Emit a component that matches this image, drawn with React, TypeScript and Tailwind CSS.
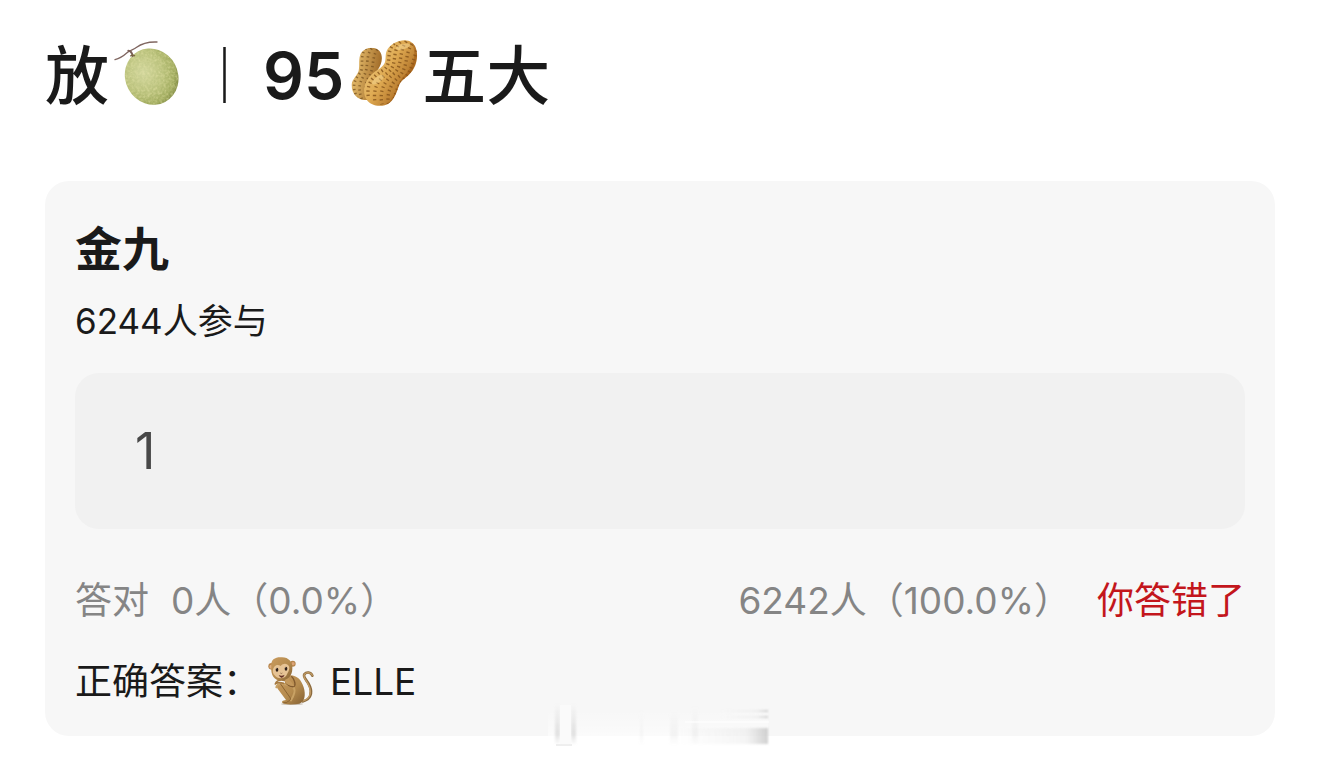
function Melon() {
  return (
    <svg viewBox="0 0 228 228" className="mb-2 size-19 shrink-0" role="img" aria-label="甜瓜">
      <defs>
        <radialGradient id="melonSkin" cx="0.4" cy="0.36" r="0.68">
          <stop offset="0" stopColor="#d0d59b" />
          <stop offset="0.55" stopColor="#b9c17b" />
          <stop offset="0.85" stopColor="#a0ab5e" />
          <stop offset="1" stopColor="#828c46" />
        </radialGradient>
        <filter id="melonGrain" x="0" y="0" width="1" height="1" colorInterpolationFilters="sRGB">
          <feTurbulence type="fractalNoise" baseFrequency="0.16" numOctaves="2" seed="4" />
          <feColorMatrix values="0 0 0 0 0.92  0 0 0 0 0.91  0 0 0 0 0.68  2.6 0 0 0 -1.05" />
          <feComposite in2="SourceGraphic" operator="in" />
        </filter>
      </defs>
      <ellipse cx="125" cy="128" rx="79" ry="86" transform="rotate(-28 125 128)" fill="url(#melonSkin)" />
      <ellipse cx="125" cy="128" rx="79" ry="86" transform="rotate(-28 125 128)" fill="#fff" filter="url(#melonGrain)" opacity="0.5" />
      <path d="M15 77C30 73 41 65 51 56C61 47 70 48 80 40C97 27 116 23 141 24" fill="none" stroke="#806761" strokeWidth="4" strokeLinecap="round" />
      <path d="M55 50C62 50 66 55 68 66" fill="none" stroke="#7b6058" strokeWidth="6" strokeLinecap="round" />
      <path d="M61 67Q68 60 75 66" fill="none" stroke="#77643f" strokeWidth="4" />
    </svg>
  );
}

function Peanuts() {
  return (
    <svg viewBox="0 0 228 228" className="mb-2 size-19 shrink-0" role="img" aria-label="花生">
      <defs>
        <linearGradient id="shell" x1="0" y1="0" x2="1" y2="0.6">
          <stop offset="0" stopColor="#c3893a" />
          <stop offset="0.3" stopColor="#edcb83" />
          <stop offset="0.62" stopColor="#dfaa52" />
          <stop offset="1" stopColor="#9c5914" />
        </linearGradient>
        <linearGradient id="shellBack" x1="0" y1="0" x2="1" y2="0.3">
          <stop offset="0" stopColor="#b77d2e" />
          <stop offset="0.4" stopColor="#dfb566" />
          <stop offset="1" stopColor="#9b6422" />
        </linearGradient>
        <clipPath id="backClip">
          <path d="M48 57C62 38 90 37 103 50C116 66 111 91 98 108C86 121 84 139 87 161C89 182 78 200 61 198C37 199 18 177 20 150C22 135 37 124 41 110C45 94 39 75 48 57Z" />
        </clipPath>
        <clipPath id="frontClip">
          <path d="M128 45C143 22 181 10 201 26C219 38 221 76 207 102C197 123 177 132 167 145C157 160 155 190 134 206C111 222 80 217 65 197C50 175 58 143 78 123C94 107 112 103 119 87C124 75 119 58 128 45Z" />
        </clipPath>
      </defs>
      <g clipPath="url(#backClip)">
        <rect width="120" height="210" fill="url(#shellBack)" />
        <g fill="none" stroke="#76501f" strokeWidth="8" strokeDasharray="4 9" opacity="0.75">
          <path d="M63 43C43 63 57 99 46 116C24 142 22 161 36 190" />
          <path d="M80 43C61 67 71 101 58 123C39 151 41 171 51 197" />
          <path d="M97 46C80 69 87 103 73 127C56 154 61 174 69 199" />
        </g>
      </g>
      <g clipPath="url(#frontClip)">
        <rect width="228" height="228" fill="url(#shell)" />
        <g fill="none" stroke="#87561d" strokeWidth="10" strokeDasharray="4 9" opacity="0.85">
          <path d="M148 28C121 55 142 85 118 106C83 127 62 150 71 194" />
          <path d="M166 24C140 55 157 88 133 112C101 137 83 158 90 206" />
          <path d="M184 22C160 54 174 92 149 117C116 143 103 171 111 211" />
          <path d="M201 30C179 61 190 96 164 126C135 151 126 178 130 209" />
          <path d="M215 50C203 79 203 107 178 134C155 159 152 178 148 195" />
        </g>
        <path d="M204 25C224 61 206 104 177 133C153 158 162 187 127 216" fill="none" stroke="#99510d" strokeWidth="9" opacity="0.4" />
        <ellipse cx="174" cy="38" rx="22" ry="8" transform="rotate(-16 174 38)" fill="#fae1a1" opacity="0.45" />
        <ellipse cx="99" cy="137" rx="21" ry="9" transform="rotate(-35 99 137)" fill="#fae1a1" opacity="0.4" />
      </g>
    </svg>
  );
}

function Monkey() {
  return (
    <svg viewBox="0 0 180 180" className="mb-1 size-15 shrink-0" role="img" aria-label="猴子">
      <defs>
        <linearGradient id="fur" x1="0" y1="0" x2="1" y2="1">
          <stop offset="0" stopColor="#c99b5e" />
          <stop offset="0.55" stopColor="#b58b4e" />
          <stop offset="1" stopColor="#846032" />
        </linearGradient>
      </defs>
      <ellipse cx="96" cy="162" rx="33" ry="3" fill="#c6bdb2" />
      <path d="M128 154C153 149 157 128 150 110C143 91 127 82 133 73C139 65 153 65 157 77" fill="none" stroke="#8b6a3d" strokeWidth="8" strokeLinecap="round" />
      <path d="M128 153C151 147 155 128 148 110C141 91 127 82 133 73C139 66 153 66 157 76" fill="none" stroke="#c19b65" strokeWidth="4" strokeLinecap="round" />
      <path d="M82 77C107 72 124 88 131 112C138 135 134 157 118 161C100 164 76 164 69 160C62 156 68 151 78 150L53 116C46 105 56 98 73 104Z" fill="url(#fur)" />
      <path d="M49 112C50 99 76 97 102 114C106 122 102 136 93 151" fill="none" stroke="#c9a265" strokeWidth="6" strokeLinecap="round" />
      <path d="M76 93C79 105 93 113 103 109C109 101 100 84 94 79" fill="none" stroke="#815a2e" strokeWidth="4" />
      <path d="M74 92C72 80 84 77 89 90L104 109C89 105 76 105 74 92Z" fill="#c4995d" />
      <path d="M46 102C50 90 63 89 73 91M47 101C55 96 64 98 71 100" fill="none" stroke="#a77b42" strokeWidth="5" strokeLinecap="round" />
      <path d="M61 101L91 144C94 152 84 153 79 158H70" fill="none" stroke="#8c6432" strokeWidth="3" />
      <circle cx="35" cy="49" r="10" fill="#b6854b" />
      <circle cx="34" cy="50" r="6" fill="#e0ae80" />
      <circle cx="98" cy="41" r="9" fill="#b6854b" />
      <circle cx="99" cy="41" r="5" fill="#dda376" />
      <path d="M34 50C31 28 47 21 64 22C85 21 99 36 97 56C97 77 83 91 64 91C45 93 31 76 34 50Z" fill="url(#fur)" />
      <path d="M43 50C48 43 57 44 62 48C69 39 82 39 87 49C90 58 84 67 81 73C76 88 52 88 44 76C37 70 37 57 43 50Z" fill="#e6c395" />
      <ellipse cx="51" cy="59" rx="4" ry="6" fill="#302018" />
      <ellipse cx="78" cy="56" rx="4" ry="6" fill="#302018" />
      <circle cx="50" cy="56" r="1" fill="#fff" />
      <circle cx="77" cy="53" r="1" fill="#fff" />
      <path d="M61 69Q64 72 67 69" fill="none" stroke="#77513a" strokeWidth="2" />
      <path d="M56 75Q65 80 74 74Q70 84 64 83Q59 82 56 75Z" fill="#633025" />
    </svg>
  );
}

function Smudge() {
  return (
    <svg viewBox="0 0 240 60" className="absolute -bottom-5 left-1/2 h-15 w-60 -translate-x-1/2" aria-hidden="true">
      <defs>
        <linearGradient id="fade" x1="0" y1="0" x2="0" y2="1">
          <stop offset="0" stopColor="#fff" stopOpacity="0" />
          <stop offset="1" stopColor="#fff" />
        </linearGradient>
        <linearGradient id="shadeRight">
          <stop offset="0" stopColor="#bbb" stopOpacity="0" />
          <stop offset="0.75" stopColor="#bbb" stopOpacity="0.15" />
          <stop offset="1" stopColor="#aaa" stopOpacity="0.55" />
        </linearGradient>
        <linearGradient id="shadeDown" x1="0" y1="0" x2="0" y2="1">
          <stop offset="0" stopColor="#c4c4c4" stopOpacity="0" />
          <stop offset="0.75" stopColor="#c4c4c4" stopOpacity="0.6" />
          <stop offset="1" stopColor="#c4c4c4" stopOpacity="0.1" />
        </linearGradient>
        <filter id="soft" x="-0.1" y="-0.2" width="1.2" height="1.4">
          <feGaussianBlur stdDeviation="1" />
        </filter>
      </defs>
      <rect x="8" y="14" width="220" height="35" fill="url(#fade)" opacity="0.7" />
      <g filter="url(#soft)">
        <rect x="15" y="8" width="5" height="40" fill="url(#shadeDown)" opacity="0.8" />
        <rect x="31" y="8" width="5" height="40" fill="url(#shadeDown)" opacity="0.8" />
        <rect x="100" y="14" width="3" height="34" fill="url(#shadeDown)" opacity="0.2" />
        <rect x="130" y="14" width="8" height="34" fill="url(#shadeDown)" opacity="0.25" />
        <rect x="152" y="10" width="6" height="38" fill="url(#shadeDown)" opacity="0.25" />
        <rect x="140" y="32" width="88" height="16" fill="url(#shadeRight)" />
        <rect x="180" y="14" width="48" height="2" fill="url(#shadeRight)" />
        <rect x="180" y="20" width="48" height="2" fill="url(#shadeRight)" />
      </g>
      <rect x="20" y="9" width="11" height="39" fill="#fafafa" />
      <path d="M16 49H32" stroke="#dedede" />
      <path d="M145 26H229" stroke="#fff" strokeWidth="2" opacity="0.6" />
    </svg>
  );
}

export default function App() {
  return (
    <main className="px-[45px] pt-9 pb-6 font-['Inter','Noto_Sans_CJK_SC',sans-serif] text-[#1a1a1a]">
      <h1 className="flex h-20 items-center gap-px text-[64px] leading-20 font-semibold whitespace-nowrap">
        <span className="font-medium">放</span>
        <Melon />
        <span className="w-[75px] text-center text-[56px] font-bold">｜</span>
        <span>95</span>
        <Peanuts />
        <span className="font-medium">五大</span>
      </h1>

      <section className="relative mt-[65px] rounded-3xl bg-[#f7f7f7] px-[30px] pt-9 pb-6">
        <h2 className="text-[47px] leading-16 font-bold">金九</h2>
        <p className="mt-4 text-[35px] leading-12">6244人参与</p>
        <input
          aria-label="你的答案"
          readOnly
          value="1"
          className="mt-7 block h-39 w-full rounded-3xl bg-[#f1f1f1] px-15 text-[50px] text-[#484848] outline-none"
        />
        <div className="mt-12 flex items-center justify-between text-[37px] leading-12 whitespace-nowrap text-[#858585]">
          <p className="flex gap-[22px]">
            <span>答对</span>
            <span>0人（0.0%）</span>
          </p>
          <p className="flex gap-[26px]">
            <span>6242人（100.0%）</span>
            <span className="text-[#c3161c]">你答错了</span>
          </p>
        </div>
        <p className="mt-[27px] flex h-15 items-center text-[37px]">
          <span>正确答案：</span>
          <Monkey />
          <span className="ml-2.5">ELLE</span>
        </p>
        <Smudge />
      </section>
    </main>
  );
}
